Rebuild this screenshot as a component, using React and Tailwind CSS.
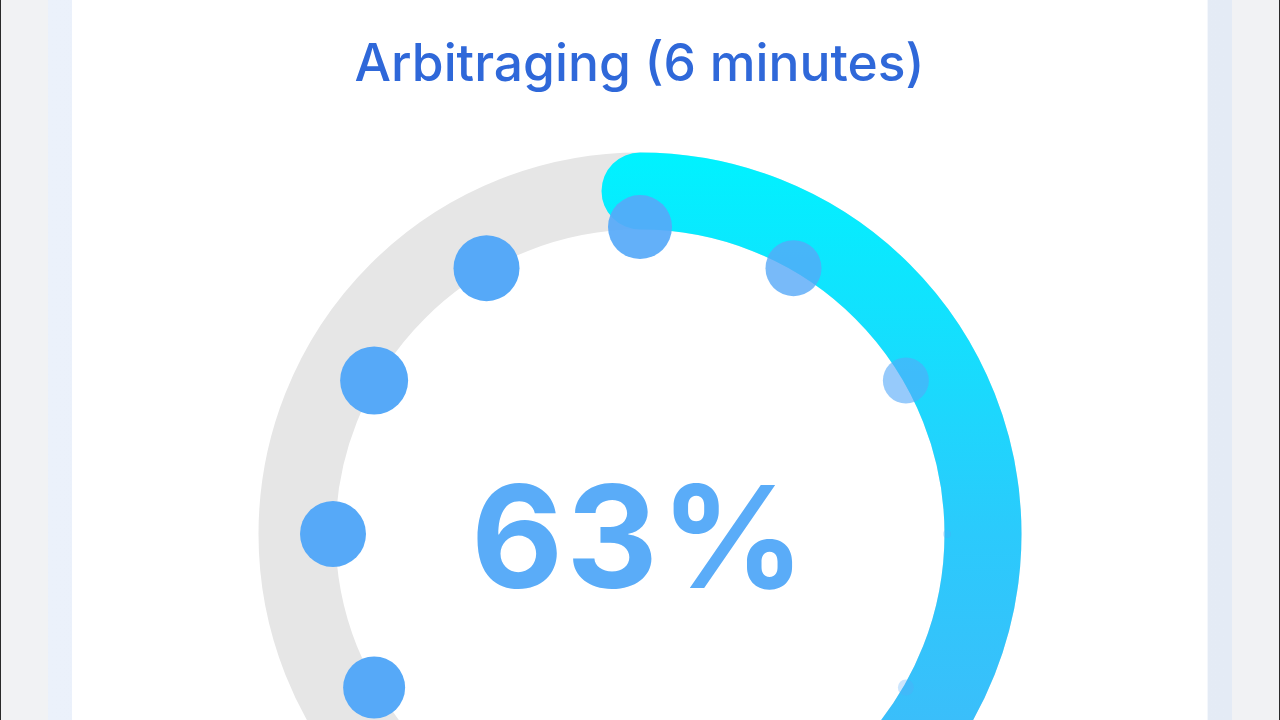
import React from 'react';

const CX = 390;
const CY = 390;
const RING_R = 343;
const DOT_R = 307;

// spinner dots: angle (deg clockwise from top), radius, opacity
const dots = [
  { a: 0, r: 32, o: 0.92 },
  { a: 30, r: 28, o: 0.8 },
  { a: 60, r: 23, o: 0.62 },
  { a: 90, r: 4, o: 0.25 },
  { a: 120, r: 8, o: 0.3 },
  { a: 240, r: 31, o: 1 },
  { a: 270, r: 33, o: 1 },
  { a: 300, r: 34, o: 1 },
  { a: 330, r: 33, o: 1 },
];

const point = (deg, r) => {
  const rad = (deg * Math.PI) / 180;
  return [CX + r * Math.sin(rad), CY - r * Math.cos(rad)];
};

const ProgressRing = ({ percent }) => {
  const end = point((percent / 100) * 360, RING_R);
  const arc = `M ${CX} ${CY - RING_R} A ${RING_R} ${RING_R} 0 0 1 ${CX} ${CY + RING_R} A ${RING_R} ${RING_R} 0 0 1 ${end[0]} ${end[1]}`;
  return (
    <svg width="780" height="600" viewBox="0 0 780 600" className="block">
      <defs>
        <linearGradient id="arc" x1="0" y1="10" x2="0" y2="772" gradientUnits="userSpaceOnUse">
          <stop offset="0" stopColor="#00f2ff" />
          <stop offset="0.5" stopColor="#2bcafc" />
          <stop offset="1" stopColor="#4ab2f8" />
        </linearGradient>
      </defs>
      <circle cx={CX} cy={CY} r={RING_R} fill="none" stroke="#e6e6e6" strokeWidth="77" />
      <path d={arc} fill="none" stroke="url(#arc)" strokeWidth="77" strokeLinecap="round" />
      {dots.map((d) => {
        const [x, y] = point(d.a, DOT_R);
        return <circle key={d.a} cx={x} cy={y} r={d.r} fill="#56a9f8" fillOpacity={d.o} />;
      })}
    </svg>
  );
};

export default function App() {
  return (
    <div className="h-screen w-full overflow-hidden bg-[#f1f2f4] border-x border-[#2a2a2a] px-[47px] font-['Inter',sans-serif]">
      <div className="h-full bg-gradient-to-r from-[#ebf1fb] to-[#e4ebf5] px-[24px]">
        <div className="h-full bg-[#f4f7fc] pr-px">
          <div className="h-full bg-white flex flex-col items-center">
            <h1 className="mt-[34px] text-[51.5px] leading-[56px] font-medium text-[#2f68d9]">
              Arbitraging (6 minutes)
            </h1>
            <div className="relative mt-[54px]">
              <ProgressRing percent={63} />
              <div className="absolute left-0 right-0 top-[312px] text-center text-[142px] leading-[160px] font-bold text-[#5aacf8] tracking-[3px]">
                63%
              </div>
            </div>
          </div>
        </div>
      </div>
    </div>
  );
}
